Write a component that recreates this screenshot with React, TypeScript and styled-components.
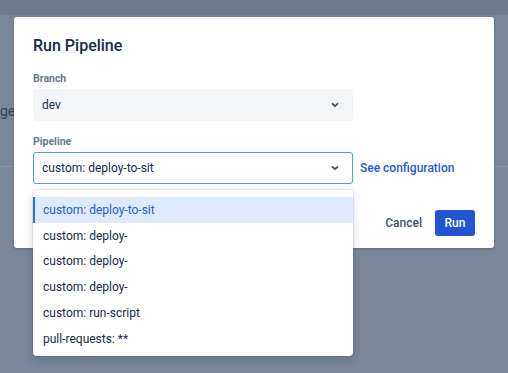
import React from "react";
import styled, { createGlobalStyle } from "styled-components";

const GlobalStyle = createGlobalStyle`
  html, body { margin: 0; padding: 0; }
  body {
    font-family: Roboto, "Noto Sans", "Liberation Sans", sans-serif;
    color: #172b4d;
    -webkit-font-smoothing: antialiased;
  }
  * { box-sizing: border-box; }
`;

const Page = styled.div`
  position: relative;
  width: 508px;
  height: 373px;
  overflow: hidden;
  background: #7a869a;
  display: flex;
  flex-direction: column;
`;

const TopBar = styled.div`
  height: 15px;
  background: #6f7b8f;
`;

const BackdropSection = styled.div`
  height: 152px;
  border-bottom: 1px solid #8a94a6;
  display: flex;
  align-items: center;
  padding-top: 40px;
`;

const BackdropText = styled.span`
  font-size: 14px;
  color: #3b4455;
`;

const Modal = styled.div`
  position: absolute;
  top: 17px;
  left: 14px;
  width: 480px;
  height: 231px;
  background: #ffffff;
  border-radius: 3px;
  box-shadow: 0 1px 3px rgba(9, 30, 66, 0.25);
  padding: 19px 19px 12px 19px;
  display: flex;
  flex-direction: column;
`;

const Title = styled.h1`
  margin: 0;
  font-size: 16px;
  line-height: 20px;
  font-weight: 500;
  color: #172b4d;
`;

const Field = styled.div<{ $top: number }>`
  margin-top: ${(p) => p.$top}px;
  display: flex;
  flex-direction: column;
`;

const Label = styled.label`
  font-size: 10.5px;
  line-height: 14px;
  font-weight: 700;
  color: #6b778c;
  margin-bottom: 3px;
`;

const FieldRow = styled.div`
  display: flex;
  align-items: center;
  gap: 7px;
`;

const SelectWrap = styled.div`
  position: relative;
  width: 320px;
`;

const SelectBox = styled.div<{ $focused?: boolean }>`
  height: 32px;
  border-radius: 3px;
  display: flex;
  align-items: center;
  justify-content: space-between;
  padding: 0 13px 0 8px;
  font-size: 12px;
  color: #172b4d;
  background: ${(p) => (p.$focused ? "#ffffff" : "#f4f5f7")};
  border: 1px solid ${(p) => (p.$focused ? "#4c9aff" : "#f4f5f7")};
`;

const Link = styled.a`
  font-size: 12px;
  font-weight: 500;
  color: #1d5bd6;
  text-decoration: none;
`;

const Menu = styled.div`
  position: absolute;
  top: calc(100% + 6px);
  left: 0;
  width: 320px;
  background: #ffffff;
  border-radius: 4px;
  box-shadow: 0 0 0 1px rgba(9, 30, 66, 0.08), 0 4px 10px rgba(9, 30, 66, 0.18);
  padding: 7px 0 4px 0;
  z-index: 2;
`;

const MenuItem = styled.div<{ $active?: boolean }>`
  height: 25.8px;
  display: flex;
  align-items: center;
  padding-left: 8px;
  font-size: 12px;
  border-left: 2px solid ${(p) => (p.$active ? "#2f6fe0" : "transparent")};
  background: ${(p) => (p.$active ? "#deebff" : "transparent")};
  color: ${(p) => (p.$active ? "#1d5bd6" : "#172b4d")};
`;

const Footer = styled.div`
  margin-top: auto;
  display: flex;
  justify-content: flex-end;
  align-items: center;
  gap: 5px;
`;

const Button = styled.button<{ $primary?: boolean }>`
  height: 26px;
  min-width: ${(p) => (p.$primary ? "40px" : "0")};
  border: none;
  border-radius: 3px;
  padding: 0 8px;
  font-family: inherit;
  font-size: 12px;
  font-weight: 500;
  cursor: pointer;
  background: ${(p) => (p.$primary ? "#2355d3" : "transparent")};
  color: ${(p) => (p.$primary ? "#ffffff" : "#42526e")};
`;

const Chevron = () => (
  <svg width="8" height="6" viewBox="0 0 8 6" aria-hidden>
    <path d="M1.5 1.8 L4 4.2 L6.5 1.8" fill="none" stroke="#42526e" strokeWidth="1.8" strokeLinecap="round" strokeLinejoin="round" />
  </svg>
);

const options = [
  "custom: deploy-to-sit",
  "custom: deploy-",
  "custom: deploy-",
  "custom: deploy-",
  "custom: run-script",
  "pull-requests: **",
];

export default function App() {
  return (
    <>
      <GlobalStyle />
      <Page>
        <TopBar />
        <BackdropSection>
          <BackdropText>ge</BackdropText>
        </BackdropSection>
        <Modal>
          <Title>Run Pipeline</Title>
          <Field $top={16}>
            <Label>Branch</Label>
            <SelectWrap>
              <SelectBox>
                <span>dev</span>
                <Chevron />
              </SelectBox>
            </SelectWrap>
          </Field>
          <Field $top={14}>
            <Label>Pipeline</Label>
            <FieldRow>
              <SelectWrap>
                <SelectBox $focused>
                  <span>custom: deploy-to-sit</span>
                  <Chevron />
                </SelectBox>
                <Menu>
                  {options.map((o, i) => (
                    <MenuItem key={i} $active={i === 0}>
                      {o}
                    </MenuItem>
                  ))}
                </Menu>
              </SelectWrap>
              <Link href="#">See configuration</Link>
            </FieldRow>
          </Field>
          <Footer>
            <Button>Cancel</Button>
            <Button $primary>Run</Button>
          </Footer>
        </Modal>
      </Page>
    </>
  );
}
